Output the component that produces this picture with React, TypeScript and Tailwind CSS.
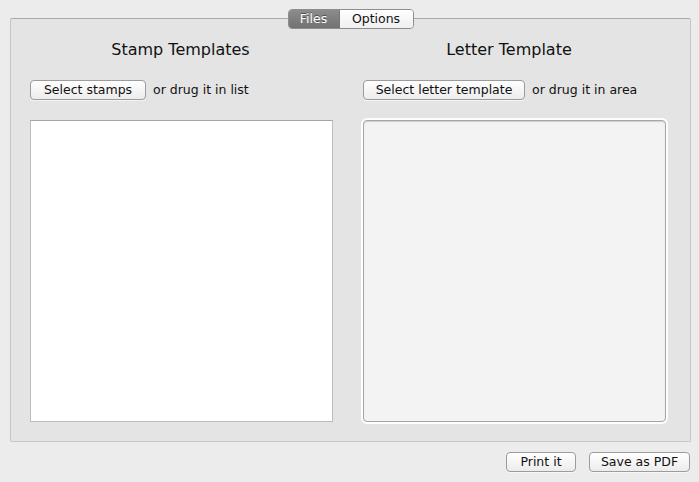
import React from "react";

const font = { fontFamily: '"DejaVu Sans", "Lucida Grande", sans-serif' };

function MacButton({ label, className = "" }: { label: string; className?: string }) {
  return (
    <button
      className={`h-[20px] rounded-[4px] border border-[#9c9c9c] bg-gradient-to-b from-[#ffffff] to-[#ececec] text-[12.5px] leading-none text-[#111] shadow-[0_1px_0_rgba(255,255,255,0.6)] ${className}`}
    >
      {label}
    </button>
  );
}

export default function App() {
  return (
    <div className="w-[699px] h-[482px] bg-[#ececec] overflow-hidden" style={font}>
      <div className="relative ml-[10px] mt-[18px] w-[681px] h-[424px] bg-[#e4e4e4] border border-[#c6c6c6] border-t-[#a9a9a9] rounded-[2px]">
        {/* tabs */}
        <div className="absolute left-1/2 -translate-x-1/2 top-[-10px] flex h-[20px] rounded-[4px] border border-[#8e8e8e] overflow-hidden text-[12.5px]">
          <div className="w-[51px] flex items-center justify-center bg-gradient-to-b from-[#8c8c8c] to-[#727272] text-white [text-shadow:0_-1px_0_rgba(0,0,0,0.4)] border-r border-[#777]">
            Files
          </div>
          <div className="w-[73px] flex items-center justify-center bg-gradient-to-b from-[#ffffff] to-[#efefef] text-[#111]">
            Options
          </div>
        </div>

        <div className="flex gap-[29px] pl-[19px] pr-[24px] pt-[20px]">
          {/* left column */}
          <div className="w-[303px] flex flex-col">
            <h2 className="text-center text-[16px] text-[#111] h-[22px] leading-[22px] ml-[-2px]">Stamp Templates</h2>
            <div className="flex items-center mt-[19px] h-[20px]">
              <MacButton label="Select stamps" className="w-[116px]" />
              <span className="ml-[7px] text-[12.5px] text-[#111]">or drug it in list</span>
            </div>
            <div className="mt-[20px] h-[302px] bg-white border border-[#bdbdbd] border-t-[#a4a4a4]" />
          </div>

          {/* right column */}
          <div className="w-[304px] flex flex-col">
            <h2 className="text-center text-[16px] text-[#111] h-[22px] leading-[22px] ml-[-10px]">Letter Template</h2>
            <div className="flex items-center mt-[19px] h-[20px]">
              <MacButton label="Select letter template" className="w-[162px] ml-[1px]" />
              <span className="ml-[7px] text-[12.5px] text-[#111]">or drug it in area</span>
            </div>
            <div className="mt-[20px] ml-[1px] h-[302px] rounded-[4px] bg-[#f3f3f3] border border-[#a6a6a6] shadow-[0_0_0_2px_rgba(255,255,255,0.9),inset_0_1px_1px_rgba(0,0,0,0.15)]" />
          </div>
        </div>
      </div>

      <div className="flex justify-end gap-[13px] mt-[10px] pr-[9px]">
        <MacButton label="Print it" className="w-[70px]" />
        <MacButton label="Save as PDF" className="w-[101px]" />
      </div>
    </div>
  );
}
